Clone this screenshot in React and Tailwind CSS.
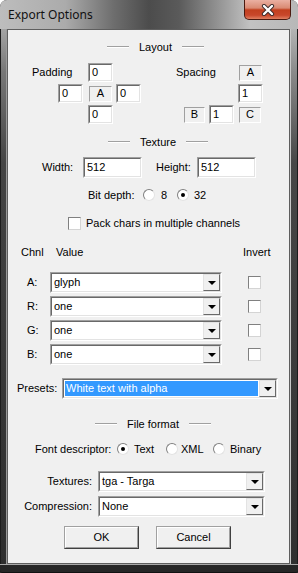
import React from "react";

const Sunken = ({ className = "", children }) => (
  <div
    className={`border border-t-[#a0a0a0] border-l-[#a0a0a0] border-b-white border-r-white ${className}`}
  >
    <div className="h-full w-full border border-t-[#696969] border-l-[#696969] border-b-[#e3e3e3] border-r-[#e3e3e3] bg-white flex items-center">
      {children}
    </div>
  </div>
);

const Edit = ({ className = "", value }) => (
  <Sunken className={className}>
    <span className="pl-[2px] leading-none">{value}</span>
  </Sunken>
);

const Static = ({ className = "", children }) => (
  <div
    className={`h-[16px] border border-t-[#a0a0a0] border-l-[#a0a0a0] border-b-white border-r-white flex items-center justify-center ${className}`}
  >
    {children}
  </div>
);

const DropButton = () => (
  <div className="w-[17px] h-full bg-[#f0f0f0] border border-t-[#e3e3e3] border-l-[#e3e3e3] border-b-[#696969] border-r-[#696969] flex items-center justify-center">
    <div className="w-0 h-0 border-l-[4px] border-r-[4px] border-t-[4px] border-l-transparent border-r-transparent border-t-black" />
  </div>
);

const Combo = ({ className = "", value, selected }) => (
  <Sunken className={`h-[21px] ${className}`}>
    {selected ? (
      <div className="flex-1 self-stretch m-[1px] bg-[#3399ff] text-white flex items-center pl-[1px]">
        {value}
      </div>
    ) : (
      <span className="flex-1 pl-[2px]">{value}</span>
    )}
    <DropButton />
  </Sunken>
);

const Radio = ({ checked }) => (
  <div className="w-[12px] h-[12px] shrink-0 rounded-full bg-white border border-t-[#808080] border-l-[#808080] border-b-[#e3e3e3] border-r-[#e3e3e3] flex items-center justify-center">
    {checked && <div className="w-[4px] h-[4px] rounded-full bg-black" />}
  </div>
);

const Check = ({ className = "" }) => (
  <div
    className={`w-[13px] h-[13px] shrink-0 bg-white border border-t-[#808080] border-l-[#808080] border-b-[#d4d4d4] border-r-[#d4d4d4] ${className}`}
  />
);

const Line = () => (
  <div className="w-[22px] h-[2px] border-t border-t-[#a0a0a0] border-b border-b-white" />
);

const Header = ({ className = "", children }) => (
  <div className={`flex items-center h-[14px] gap-[10px] ${className}`}>
    <Line />
    <span>{children}</span>
    <Line />
  </div>
);

const Button = ({ children, className = "" }) => (
  <div
    className={`w-[75px] h-[23px] border border-t-[#a0a0a0] border-l-[#a0a0a0] border-b-[#404040] border-r-[#404040] ${className}`}
  >
    <div className="h-full w-full border border-t-white border-l-white border-b-[#a0a0a0] border-r-[#a0a0a0] bg-[#f0f0f0] flex items-center justify-center">
      {children}
    </div>
  </div>
);

const CHANNELS = [
  { key: "A", value: "glyph" },
  { key: "R", value: "one" },
  { key: "G", value: "one" },
  { key: "B", value: "one" },
];

export default function App() {
  return (
    <div className="w-[298px] h-[573px] flex flex-col rounded-t-[7px] overflow-hidden bg-[#2d2d2d] text-[11px] text-black font-['Liberation_Sans',Arial,sans-serif]">
      {/* title bar */}
      <div className="h-[29px] flex items-start bg-[linear-gradient(90deg,#bdbdbd_0%,#ababab_22%,#6e6e6e_38%,#4c4c4c_50%,#5a5a5a_60%,#8e8e8e_72%,#c2c2c2_84%,#b8b8b8_100%)]">
        <span className="pl-[8px] pt-[6px] text-[12px] text-[#111] font-['Noto_Sans',sans-serif]">
          Export Options
        </span>
        <div className="ml-auto mr-[7px] w-[47px] h-[20px] rounded-b-[5px] border border-t-0 border-[#4a1a10] bg-[linear-gradient(180deg,#eab0a2_0%,#d98a73_42%,#c2401f_52%,#c8472b_80%,#e08062_100%)] flex items-center justify-center">
          <svg width="14" height="12" viewBox="0 0 14 12">
            <path d="M3 2 L11 10 M11 2 L3 10" stroke="#3a2a2a" strokeWidth="4.2" strokeLinecap="round" />
            <path d="M3 2 L11 10 M11 2 L3 10" stroke="#ffffff" strokeWidth="2.4" strokeLinecap="round" />
          </svg>
        </div>
      </div>

      <div className="flex flex-1">
        <div className="w-[7px] bg-[linear-gradient(180deg,#a4a4a4_0%,#777_8%,#444_25%,#2e2e2e_100%)] border-l border-l-[#1c1c1c] border-r border-r-[#9a9a9a]" />

        {/* client area */}
        <div className="flex-1 bg-[#f0f0f0] border border-[#5e5e5e] flex flex-col">
          <Header className="mt-[10px] pl-[99px]">Layout</Header>

          <div className="mt-[9px] h-[19px] flex items-center pl-[24px]">
            <span className="w-[56px]">Padding</span>
            <Edit className="w-[25px] h-[19px]" value="0" />
            <span className="ml-[63px] w-[63px]">Spacing</span>
            <Static className="w-[23px]">A</Static>
          </div>
          <div className="mt-[2px] h-[19px] flex items-center pl-[50px]">
            <Edit className="w-[25px] h-[19px]" value="0" />
            <Static className="ml-[6px] w-[23px]">A</Static>
            <Edit className="ml-[4px] w-[25px] h-[19px]" value="0" />
            <Edit className="ml-[97px] w-[25px] h-[19px]" value="1" />
          </div>
          <div className="mt-[2px] h-[19px] flex items-center pl-[80px]">
            <Edit className="w-[25px] h-[19px]" value="0" />
            <Static className="ml-[71px] w-[21px]">B</Static>
            <Edit className="ml-[4px] w-[25px] h-[19px]" value="1" />
            <Static className="ml-[5px] w-[22px]">C</Static>
          </div>

          <Header className="mt-[11px] pl-[100px]">Texture</Header>

          <div className="mt-[8px] h-[21px] flex items-center pl-[34px]">
            <span className="w-[41px]">Width:</span>
            <Edit className="w-[59px] h-[21px]" value="512" />
            <span className="ml-[14px] w-[41px]">Height:</span>
            <Edit className="w-[59px] h-[21px]" value="512" />
          </div>

          <div className="mt-[10px] h-[14px] flex items-center pl-[80px]">
            <span className="w-[55px]">Bit depth:</span>
            <Radio />
            <span className="ml-[6px] w-[16px]">8</span>
            <Radio checked />
            <span className="ml-[5px]">32</span>
          </div>

          <div className="mt-[14px] h-[14px] flex items-center pl-[60px]">
            <Check />
            <span className="ml-[5px]">Pack chars in multiple channels</span>
          </div>

          <div className="mt-[15px] h-[14px] flex items-center pl-[13px]">
            <span className="w-[35px]">Chnl</span>
            <span className="w-[187px]">Value</span>
            <span>Invert</span>
          </div>

          <div className="mt-[13px] flex flex-col gap-[3px]">
            {CHANNELS.map(({ key, value }) => (
              <div key={key} className="h-[21px] flex items-center pl-[19px]">
                <span className="w-[23px]">{key}:</span>
                <Combo className="w-[172px]" value={value} />
                <Check className="ml-[26px]" />
              </div>
            ))}
          </div>

          <div className="mt-[13px] h-[21px] flex items-center pl-[9px]">
            <span className="w-[45px]">Presets:</span>
            <Combo className="w-[216px]" value="White text with alpha" selected />
          </div>

          <Header className="mt-[18px] pl-[87px]">File format</Header>

          <div className="mt-[11px] h-[14px] flex items-center pl-[27px]">
            <span className="w-[82px]">Font descriptor:</span>
            <Radio checked />
            <span className="ml-[5px] w-[32px]">Text</span>
            <Radio />
            <span className="ml-[3px] w-[32px]">XML</span>
            <Radio />
            <span className="ml-[5px]">Binary</span>
          </div>

          <div className="mt-[15px] h-[21px] flex items-center">
            <span className="w-[84px] text-right">Textures:</span>
            <Combo className="ml-[6px] w-[167px]" value="tga - Targa" />
          </div>
          <div className="mt-[4px] h-[21px] flex items-center">
            <span className="w-[84px] text-right">Compression:</span>
            <Combo className="ml-[6px] w-[167px]" value="None" />
          </div>

          <div className="mt-[9px] h-[23px] flex items-center pl-[56px]">
            <Button>OK</Button>
            <Button className="ml-[17px]">Cancel</Button>
          </div>
        </div>

        <div className="w-[8px] bg-[linear-gradient(180deg,#b4b4b4_0%,#8a8a8a_8%,#474747_25%,#303030_100%)] border-l border-l-[#c8c8c8] border-r border-r-[#1c1c1c]" />
      </div>

      <div className="h-[9px] bg-[#262626] border-t border-t-[#a8a8a8] border-b border-b-[#111] rounded-b-[3px]" />
    </div>
  );
}
